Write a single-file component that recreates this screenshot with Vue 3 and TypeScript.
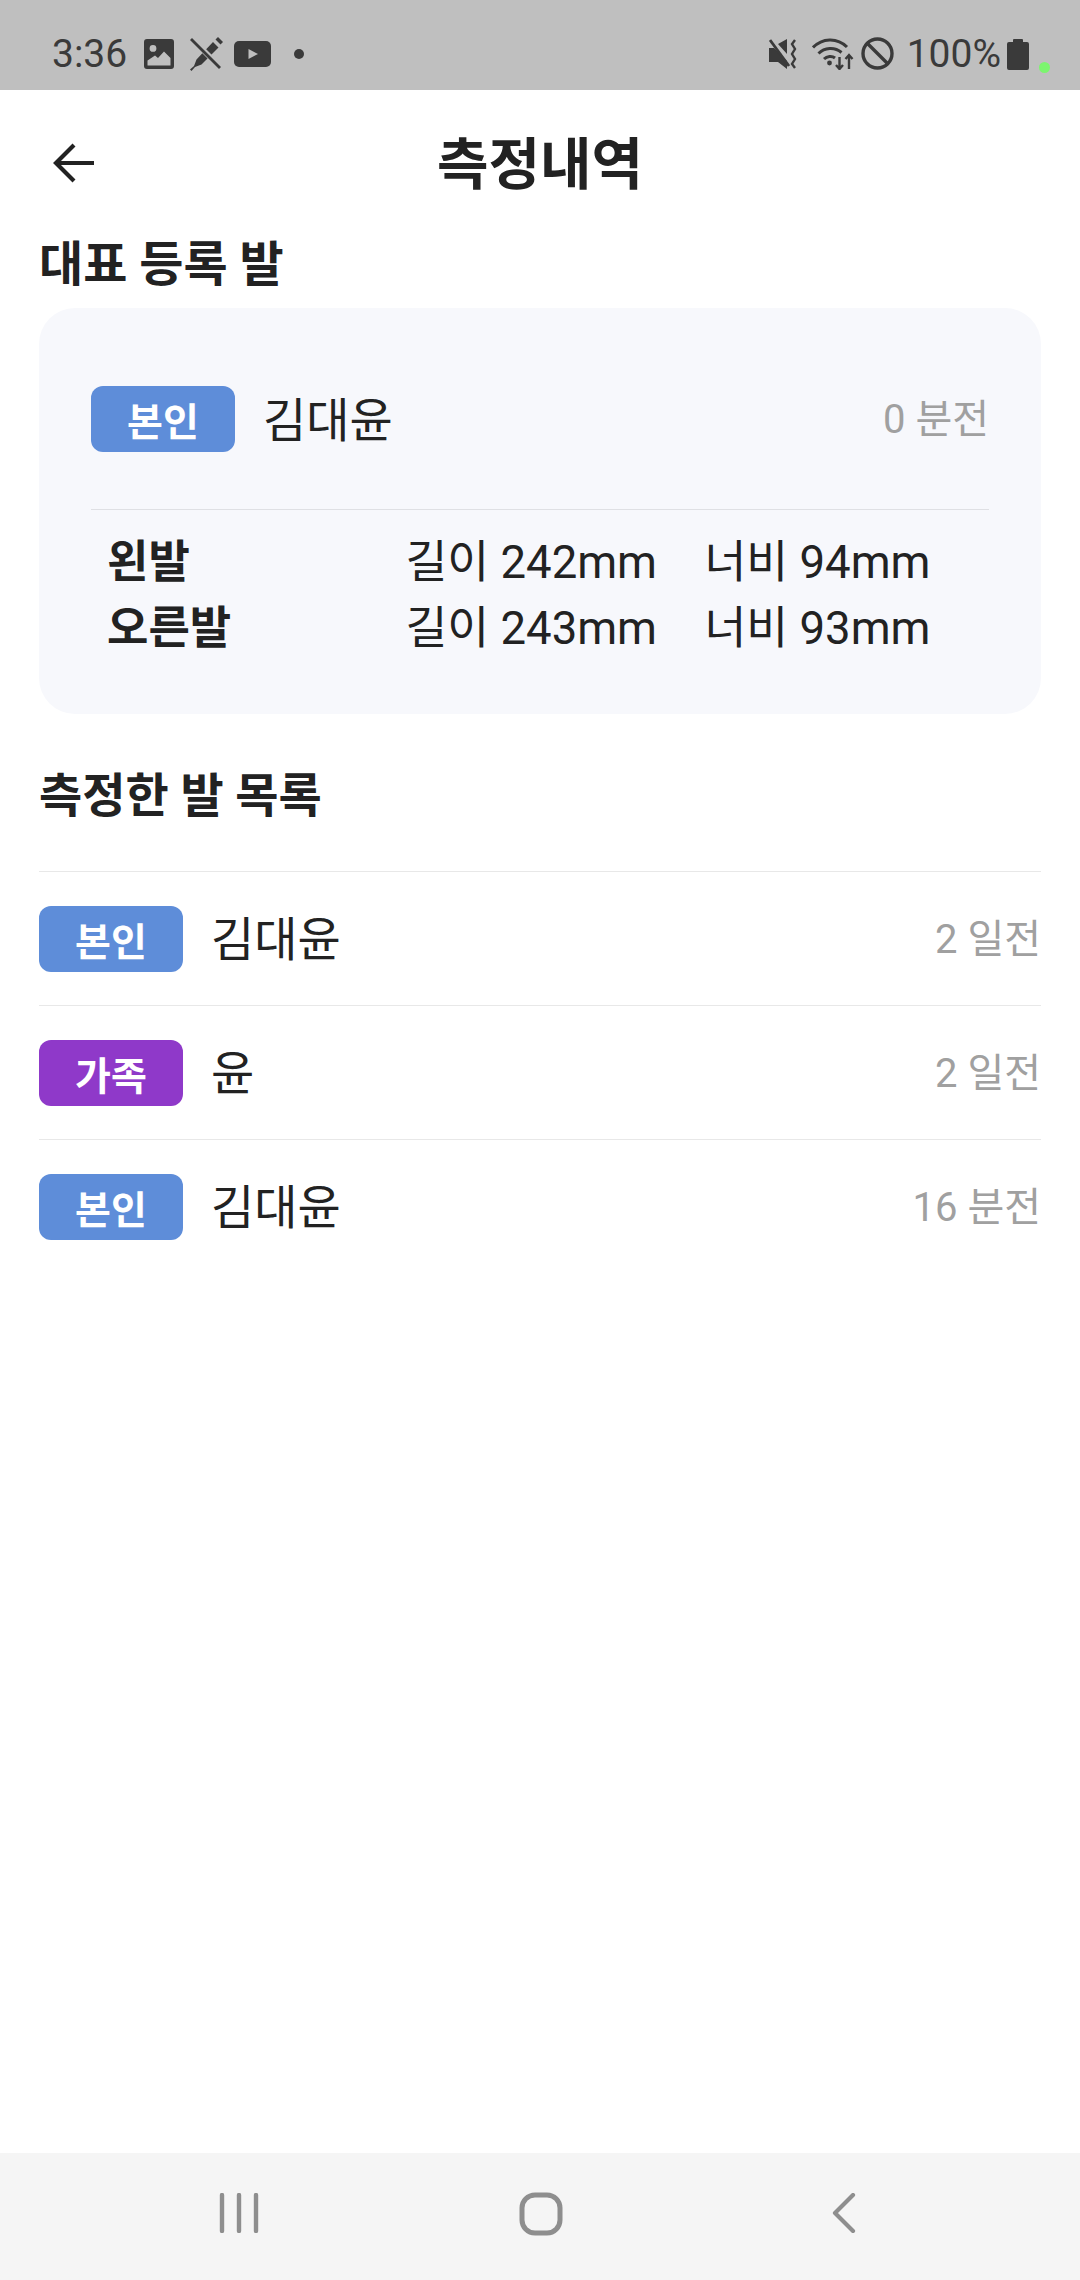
<script setup lang="ts">
interface Measure {
  type: string;
  tagClass: string;
  name: string;
  time: string;
}

const feet = [
  { side: '왼발', length: '길이 242mm', width: '너비 94mm' },
  { side: '오른발', length: '길이 243mm', width: '너비 93mm' },
];

const measures: Measure[] = [
  { type: '본인', tagClass: 'tag-self', name: '김대윤', time: '2 일전' },
  { type: '가족', tagClass: 'tag-family', name: '윤', time: '2 일전' },
  { type: '본인', tagClass: 'tag-self', name: '김대윤', time: '16 분전' },
];
</script>

<template>
  <div class="screen">
    <!-- 상태 표시줄 -->
    <div class="status-bar">
      <div class="status-left">
        <span class="clock">3:36</span>
        <svg class="ic-gallery" viewBox="0 0 30 30" width="30" height="30">
          <path fill="#3a3a3a" fill-rule="evenodd" d="M3 0h24a3 3 0 0 1 3 3v24a3 3 0 0 1-3 3H3a3 3 0 0 1-3-3V3a3 3 0 0 1 3-3zM9 6a3.400 3.400 0 1 0 0 6.800A3.400 3.400 0 0 0 9 6zM3.500 21.500V26.500h23V19l-6.500-6.500-6 6.500-3-2.500z" />
        </svg>
        <svg class="ic-pen" viewBox="0 0 34 34" width="34" height="34">
          <path fill="#3a3a3a" d="M24 5l5.500 5.500-17 17-6.500 2.500-3.500 4-1.500-1.500 4-3.500 2.500-6.500z" />
          <path fill="#3a3a3a" d="M26.500 2.500l2.500-2.500 5 5-2.500 2.500z" />
          <path d="M3 2 32 31" stroke="#bfbfbf" stroke-width="5.500" fill="none" />
          <path d="M2 2 31 31" stroke="#3a3a3a" stroke-width="2.800" fill="none" />
        </svg>
        <svg class="ic-youtube" viewBox="0 0 37 26" width="37" height="26">
          <rect width="37" height="26" rx="5" fill="#3a3a3a" />
          <path d="M14.500 8v10l9.500-5z" fill="#bfbfbf" />
        </svg>
        <span class="dot"></span>
      </div>
      <div class="status-right">
        <svg class="ic-mute" viewBox="0 0 30 30" width="30" height="30">
          <path fill="#3a3a3a" d="M0 9h5l2 2 11 11v8l-9-7H0zM9 5l9-5v15z" />
          <path d="M1 1 20 27" stroke="#3a3a3a" stroke-width="2.800" fill="none" />
          <path d="M26 1l-3 4 3 5-3 5 3 5-3 5 3 4" stroke="#3a3a3a" stroke-width="2.400" fill="none" />
        </svg>
        <svg class="ic-wifi" viewBox="0 0 42 32" width="42" height="32">
          <g fill="none" stroke="#3a3a3a" stroke-width="3">
            <path d="M1 9.500C10 0 25 -1 35 9" />
            <path d="M6.500 15.500c6-6 16-7 23-1" />
            <path d="M12 21c3-3 8-3.500 11-1" />
          </g>
          <circle cx="17.500" cy="25" r="2.400" fill="#3a3a3a" />
          <path d="M27.500 19v12M24 27l3.500 4 3.500-4M37 31V17M33.500 21l3.500-4 3.500 4" stroke="#3a3a3a" stroke-width="2.400" fill="none" />
        </svg>
        <svg class="ic-block" viewBox="0 0 33 33" width="33" height="33">
          <circle cx="16.500" cy="16.500" r="14.500" stroke="#3a3a3a" stroke-width="3.400" fill="none" />
          <path d="M6 6 27 27" stroke="#3a3a3a" stroke-width="3.400" />
        </svg>
        <span class="battery-text">100%</span>
        <svg class="ic-battery" viewBox="0 0 22 32" width="22" height="32">
          <path fill="#3a3a3a" d="M6 2a1 1 0 0 1 1-1h8a1 1 0 0 1 1 1v2h4a2 2 0 0 1 2 2v24a2 2 0 0 1-2 2H2a2 2 0 0 1-2-2V6a2 2 0 0 1 2-2h4z" />
        </svg>
      </div>
      <span class="led"></span>
    </div>

    <!-- 헤더 -->
    <header class="app-header">
      <svg class="back" viewBox="0 0 42 40" width="42" height="40">
        <path d="M42 20H4M22 2 4 20l18 18" stroke="#222" stroke-width="4.200" fill="none" />
      </svg>
      <h1 class="app-title">측정내역</h1>
    </header>

    <main class="content">
      <h2 class="section-title">대표 등록 발</h2>
      <section class="rep-card">
        <div class="rep-top">
          <span class="tag tag-self">본인</span>
          <span class="name">김대윤</span>
          <span class="time">0 분전</span>
        </div>
        <div class="rep-feet">
          <div v-for="foot in feet" :key="foot.side" class="foot-row">
            <span class="foot-side">{{ foot.side }}</span>
            <span class="foot-length">{{ foot.length }}</span>
            <span class="foot-width">{{ foot.width }}</span>
          </div>
        </div>
      </section>

      <h2 class="section-title list-title">측정한 발 목록</h2>
      <ul class="measure-list">
        <li v-for="(item, i) in measures" :key="i" class="measure-row">
          <span class="tag" :class="item.tagClass">{{ item.type }}</span>
          <span class="name">{{ item.name }}</span>
          <span class="time">{{ item.time }}</span>
        </li>
      </ul>
    </main>

    <!-- 하단 내비게이션 -->
    <nav class="nav-bar">
      <svg viewBox="0 0 40 40" width="40" height="40" class="nav-icon">
        <path d="M3 2v36M20 2v36M37 2v36" stroke="#8e8e8e" stroke-width="4.400" stroke-linecap="round" fill="none" />
      </svg>
      <svg viewBox="0 0 44 44" width="44" height="44" class="nav-icon">
        <rect x="3" y="3" width="38" height="38" rx="13" stroke="#8e8e8e" stroke-width="5" fill="none" />
      </svg>
      <svg viewBox="0 0 24 40" width="24" height="40" class="nav-icon">
        <path d="M21 2 3 20l18 18" stroke="#8e8e8e" stroke-width="4.200" stroke-linecap="round" stroke-linejoin="round" fill="none" />
      </svg>
    </nav>
  </div>
</template>

<style>
html,
body {
  margin: 0;
  background: #fff;
}
</style>

<style scoped>
.screen {
  width: 1080px;
  height: 2280px;
  display: flex;
  flex-direction: column;
  background: #fff;
  color: #222;
  font-family: Roboto, "Noto Sans CJK KR", sans-serif;
  overflow: hidden;
}

.status-bar {
  position: relative;
  height: 90px;
  flex: none;
  display: flex;
  justify-content: space-between;
  align-items: center;
  padding: 0 51px 0 52px;
  box-sizing: border-box;
  background: #bfbfbf;
  color: #3a3a3a;
  font-size: 39px;
}

.status-left,
.status-right {
  display: flex;
  align-items: center;
  height: 32px;
  margin-top: 17px;
}

.clock {
  width: 92px;
}

.ic-pen {
  margin-left: 15px;
}

.ic-youtube {
  margin-left: 11px;
}

.dot {
  width: 10px;
  height: 10px;
  margin-left: 23px;
  border-radius: 50%;
  background: #3a3a3a;
}

.ic-wifi {
  margin-left: 13px;
}

.ic-block {
  margin-left: 7px;
}

.battery-text {
  margin-left: 13px;
}

.ic-battery {
  margin-left: 6px;
}

.led {
  position: absolute;
  right: 30px;
  top: 62px;
  width: 11px;
  height: 11px;
  border-radius: 50%;
  background: #7cf56f;
}

.app-header {
  position: relative;
  height: 142px;
  flex: none;
  padding-top: 8px;
  box-sizing: border-box;
  display: flex;
  align-items: center;
  justify-content: center;
}

.back {
  position: absolute;
  left: 52px;
  top: 53px;
}

.app-title {
  margin: 0;
  font-size: 56px;
  font-weight: 700;
  line-height: 1;
}

.content {
  flex: 1;
  padding: 0 39px;
}

.section-title {
  margin: 0;
  font-size: 48px;
  font-weight: 700;
  line-height: 66px;
}

.rep-card {
  margin-top: 10px;
  height: 406px;
  padding: 78px 52px 0;
  box-sizing: border-box;
  border-radius: 36px;
  background: #f7f8fc;
}

.rep-top {
  display: flex;
  align-items: center;
  height: 66px;
}

.rep-feet {
  margin-top: 57px;
  padding: 15px 16px 0;
  border-top: 1px solid #dfe0e4;
}

.foot-row {
  display: flex;
  align-items: center;
  height: 66px;
  font-size: 45.5px;
}

.foot-side {
  width: 298.5px;
  font-weight: 700;
  font-size: 45px;
}

.foot-length {
  width: 299px;
}

.tag {
  flex: none;
  width: 144px;
  height: 66px;
  border-radius: 12px;
  display: flex;
  align-items: center;
  justify-content: center;
  color: #fff;
  font-size: 39px;
  font-weight: 700;
}

.tag-self {
  background: #5e8dd9;
}

.tag-family {
  background: #8f39c9;
}

.name {
  margin-left: 28px;
  padding-bottom: 6px;
  font-size: 47px;
}

.time {
  margin-left: auto;
  padding-bottom: 6px;
  font-size: 40px;
  color: #a0a0a0;
}

.list-title {
  margin-top: 49px;
  font-size: 47px;
}

.measure-list {
  list-style: none;
  margin: 42px 0 0;
  padding: 0;
}

.measure-row {
  display: flex;
  align-items: center;
  height: 133px;
  border-top: 1px solid #e8e8e8;
}

.nav-bar {
  flex: none;
  height: 127px;
  position: relative;
  background: #f5f5f5;
}

.nav-icon {
  position: absolute;
  top: 40px;
}

.nav-icon:nth-child(1) {
  left: 219px;
}

.nav-icon:nth-child(2) {
  left: 519px;
  top: 39px;
}

.nav-icon:nth-child(3) {
  left: 832px;
}
</style>
